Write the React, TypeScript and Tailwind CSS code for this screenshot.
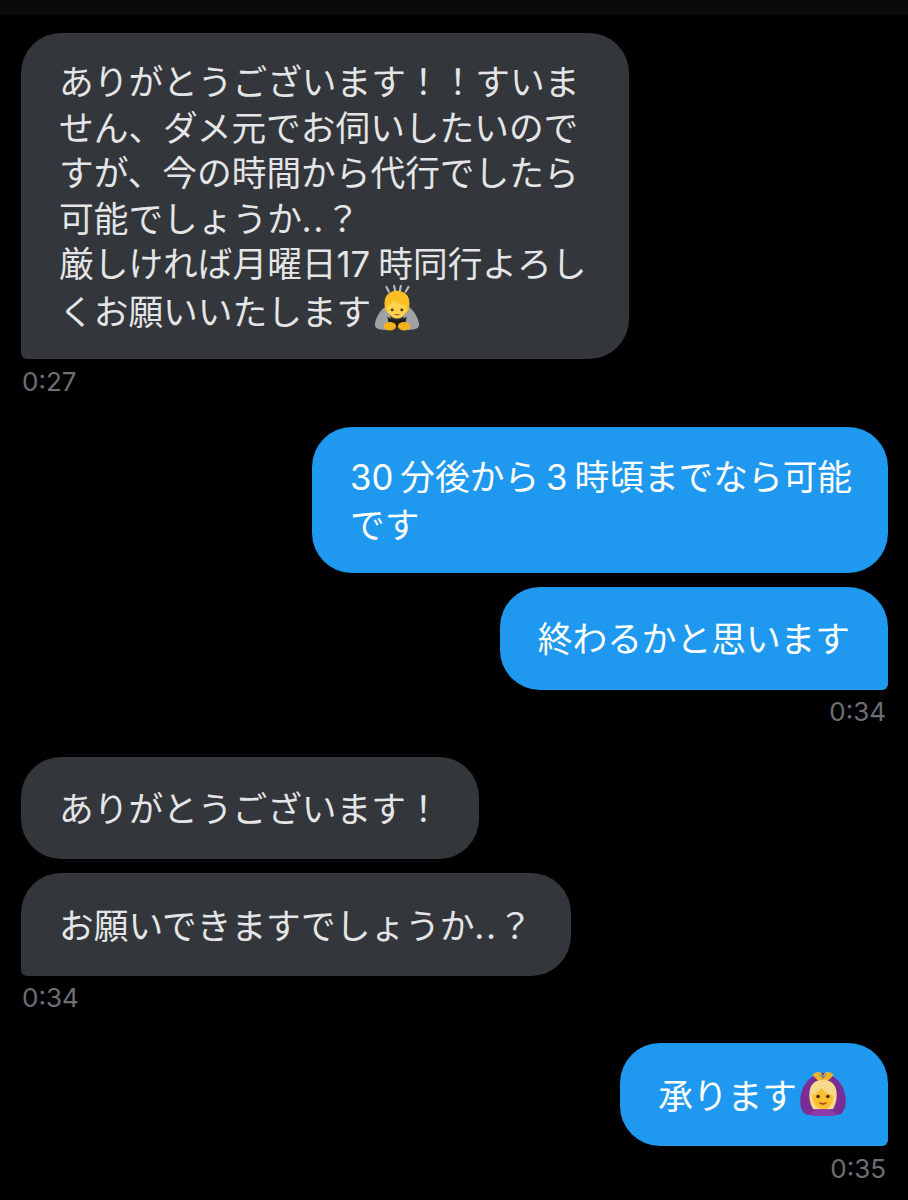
import React from "react";

const jp = "font-['Hiragino_Sans','Noto_Sans_CJK_JP','Noto_Sans_CJK_SC',sans-serif]";

function BowEmoji() {
  return (
    <svg viewBox="0 0 48 48" className="-my-2 ml-[2px] mr-[3px] inline-block h-[46px] w-[48px] -translate-y-2 align-middle">
      <g stroke="#b9bcbf" strokeWidth="2.2" strokeLinecap="round">
        <path d="M13 2l2.5 5" />
        <path d="M21 1l1 5" />
        <path d="M28 1l-1 5" />
        <path d="M36 2l-3 5" />
      </g>
      <path d="M14 21C6 26 2 34 1 40c-1 5 4 7 10 7h8l-1-10c-1-4-2-10-4-16z" fill="#9fa1a4" />
      <path d="M34 21c8 5 12 13 13 19 1 5-4 7-10 7h-8l1-10c1-4 2-10 4-16z" fill="#9fa1a4" />
      <path d="M14 33c5 4 15 4 20 0l-2 11H16z" fill="#1f1e1c" />
      <path d="M11 19C11 10 17 6 24 6s13 4 13 13c0 5-1 8-3 10H14c-2-2-3-5-3-10z" fill="#fbbf24" />
      <path d="M14 22c3-1 5-3 6-6 4 3 9 5 14 5 1 7-3 14-10 14-6 0-11-6-10-13z" fill="#fdd34f" />
      <circle cx="19" cy="26" r="1.5" fill="#4a3415" />
      <circle cx="29" cy="26" r="1.5" fill="#4a3415" />
      <path d="M22 31h4" stroke="#a8621e" strokeWidth="1.3" strokeLinecap="round" />
      <ellipse cx="16.5" cy="43" rx="6.5" ry="4.4" fill="#f5b21e" />
      <ellipse cx="31.5" cy="43" rx="6.5" ry="4.4" fill="#f5b21e" />
    </svg>
  );
}

function OkEmoji() {
  return (
    <svg viewBox="0 0 48 48" className="-my-2 ml-[2px] mr-[3px] inline-block h-[47px] w-[48px] -translate-y-[6px] align-middle">
      <path d="M24 3C12 4 3 14 1 27c-1 9 1 15 5 18 5 2.500 31 2.500 36 0 4-3 6-9 5-18C45 14 36 4 24 3z" fill="#7a2d94" />
      <path d="M13 5c3-3 7-4 9-2l2 3 2-3c2-2 6-1 9 2l-6 6H19z" fill="#f0b429" />
      <path d="M19 3l5 4 5-4-5 6z" fill="#3c86cf" />
      <path d="M10 25c0-10 6-15 14-15s14 5 14 15c0 7-2 12-4 15H14c-2-3-4-8-4-15z" fill="#f7d98c" />
      <path d="M13 26c3-1 7-4 9-8 3 4 8 7 13 8 0 8-5 14-11 14S13 34 13 26z" fill="#fdbf2d" />
      <circle cx="19" cy="27" r="1.8" fill="#3d2a12" />
      <circle cx="29" cy="27" r="1.8" fill="#3d2a12" />
      <path d="M21 33.500c2 1.400 4 1.400 6 0" stroke="#b3471f" strokeWidth="1.6" fill="none" strokeLinecap="round" />
      <path d="M10 46c2-4 8-6 14-6s12 2 14 6c-6 1.500-22 1.500-28 0z" fill="#8e3aa8" />
    </svg>
  );
}

function Gap({ w = "w-[7px]" }: { w?: string }) {
  return <span className={`${w} inline-block`} />;
}

function Num({ children }: { children: string }) {
  return <span className="font-['Inter',sans-serif]">{children}</span>;
}

function Dots() {
  return <span className="tracking-[2px]">..</span>;
}

function Bubble({
  mine,
  tail,
  className = "",
  children,
}: {
  mine?: boolean;
  tail?: boolean;
  className?: string;
  children: React.ReactNode;
}) {
  const color = mine ? "bg-[#1f99ef] text-white" : "bg-[#33363a] text-[#e4e5e6]";
  const corner = tail ? (mine ? "rounded-br-[6px]" : "rounded-bl-[6px]") : "";
  return (
    <div
      className={`${color} ${corner} ${className} rounded-[40px] px-[38px] text-[34.7px] leading-[45.6px] font-normal whitespace-nowrap`}
    >
      {children}
    </div>
  );
}

function Time({ right, className = "", children }: { right?: boolean; className?: string; children: string }) {
  return (
    <div
      className={`${right ? "mr-[2px] self-end" : "ml-px"} ${className} font-['Inter',sans-serif] text-[26px] leading-[30px] text-[#6c7074]`}
    >
      {children}
    </div>
  );
}

export default function App() {
  return (
    <div className={`${jp} h-[1200px] w-[908px] overflow-hidden bg-black`}>
      <div className="h-[15px] bg-[#0a0a0c]" />
      <div className="flex flex-col items-start pl-[21px] pr-[20px] pt-[18px]">
        <Bubble tail className="w-[608px] py-[25px]">
          ありがとうございます！！すいま
          <br />
          せん、ダメ元でお伺いしたいので
          <br />
          すが、今の時間から代行でしたら
          <br />
          可能でしょうか
          <Dots />？
          <br />
          厳しければ月曜日
          <Num>17</Num>
          <Gap w="w-[8px]" />
          時同行よろし
          <br />
          くお願いいたします
          <BowEmoji />
        </Bubble>
        <Time className="mt-2">0:27</Time>
        <Bubble mine className="mt-[30px] w-[576px] self-end py-[26.4px]">
          <Num>30</Num>
          <Gap />
          分後から
          <Gap />
          <Num>3</Num>
          <Gap />
          時頃までなら可能
          <br />
          です
        </Bubble>
        <Bubble mine tail className="mt-[14px] self-end py-[28.7px]">
          終わるかと思います
        </Bubble>
        <Time right className="mt-[7px]">
          0:34
        </Time>
        <Bubble className="mt-[30px] py-[28.7px]">ありがとうございます！</Bubble>
        <Bubble tail className="mt-[14px] py-[28.7px]">
          お願いできますでしょうか
          <Dots />？
        </Bubble>
        <Time className="mt-[7px]">0:34</Time>
        <Bubble mine tail className="mt-[30px] self-end py-[28.7px]">
          承ります
          <OkEmoji />
        </Bubble>
        <Time right className="mt-2">
          0:35
        </Time>
      </div>
    </div>
  );
}
